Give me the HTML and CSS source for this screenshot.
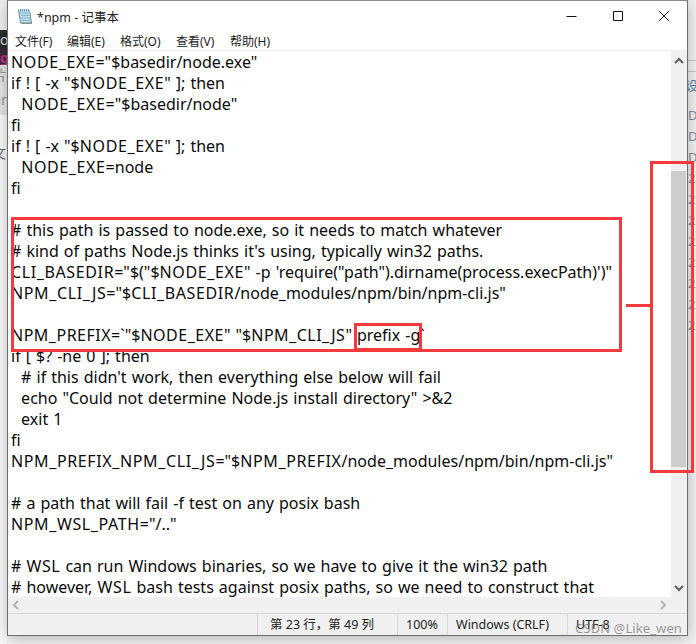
FILE: index.html
```html
<!DOCTYPE html>
<html lang="zh-CN">
<head>
<meta charset="utf-8">
<title>*npm - 记事本</title>
<link rel="stylesheet" href="styles.css">
</head>
<body>
<div class="desktop">
  <div class="bg-left">
    <div class="bl-light"></div>
    <div class="bl-dark">oc</div>
    <div class="bl-pink">g</div>
    <div class="bl-text">片</div>
    <div class="bl-text">er</div>
    <div class="bl-white">文</div>
  </div>
  <div class="bg-right">
    <div class="br-top"></div>
    <div class="br-label">设</div>
    <div class="br-date">D2</div><div class="br-date">D2</div><div class="br-date">D2</div>
    <div class="br-date">22</div><div class="br-date">22</div><div class="br-date">22</div><div class="br-date">22</div>
    <div class="br-date">22</div><div class="br-date">22</div><div class="br-date">22</div><div class="br-date">22</div>
  </div>

  <div class="window">
    <header class="titlebar">
      <svg class="app-icon" width="17" height="17" viewBox="0 0 17 17">
        <path d="M1.500 2h11l2 13h-11z" fill="#b9dcec" stroke="#6d8f9e"/>
        <path d="M3.500 5h9M3.900 7.500h9M4.300 10h9M4.700 12.500h9" stroke="#7fb0c6" stroke-width=".8"/>
        <path d="M1.500 1.500h11.500v2H1.500z" fill="#4f93b5"/>
        <path d="M2.500 1v3M4.500 1v3M6.500 1v3M8.500 1v3M10.500 1v3M12.500 1v3" stroke="#e8f3f7" stroke-width=".7"/>
        <path d="M4.500 15.500h10.500" stroke="#8a8f80" stroke-width="1"/>
      </svg>
      <span class="title">*npm - 记事本</span>
      <div class="controls">
        <svg class="ctl" width="46" height="20" viewBox="0 0 46 20"><path d="M17.500 10.500h10" stroke="#111" fill="none"/></svg>
        <svg class="ctl" width="46" height="20" viewBox="0 0 46 20"><path d="M18.500 5.500h9v9h-9z" stroke="#111" fill="none"/></svg>
        <svg class="ctl" width="46" height="20" viewBox="0 0 46 20"><path d="M18 5l10 10M28 5L18 15" stroke="#111" fill="none"/></svg>
      </div>
    </header>
    <nav class="menu">
      <span class="m1">文件(F)</span><span class="m2">编辑(E)</span><span class="m3">格式(O)</span><span class="m4">查看(V)</span><span class="m5">帮助(H)</span>
    </nav>
    <div class="editor-row">
      <pre class="editor"><span class="u">NODE_EXE</span>="$basedir/node.exe"
if ! [ -x "$<span class="u">NODE_EXE</span>" ]; then
  <span class="u">NODE_EXE</span>="$basedir/node"
fi
if ! [ -x "$<span class="u">NODE_EXE</span>" ]; then
  <span class="u">NODE_EXE</span>=node
fi

# this path is passed to node.exe, so it needs to match whatever
# kind of paths Node.js thinks it's using, typically win32 paths.
<span class="u">CLI_BASEDIR</span>="$("$<span class="u">NODE_EXE</span>" -p 'require("path").dirname(process.execPath)')"
<span class="u">NPM_CLI_JS</span>="$<span class="u">CLI_BASEDIR</span>/node_modules/npm/bin/npm-cli.js"

<span class="u2">NPM_PREFIX</span>=`"$<span class="u2">NODE_EXE</span>" "$<span class="u2">NPM_CLI_JS</span>" prefix -g`
if [ $? -ne 0 ]; then
  # if this didn't work, then everything else below will fail
  echo "Could not determine Node.js install directory" &gt;&amp;2
  exit 1
fi
<span class="u">NPM_PREFIX_NPM_CLI_JS</span>="$<span class="u">NPM_PREFIX</span>/node_modules/npm/bin/npm-cli.js"

# a path that will fail -f test on any posix bash
<span class="u">NPM_WSL_PATH</span>="/.."

# <span class="u">WSL</span> can run Windows binaries, so we have to give it the win32 path
# however, <span class="u">WSL</span> bash tests against posix paths, so we need to construct that</pre>
      <div class="vscroll">
        <svg width="16" height="17" viewBox="0 0 16 17"><path d="M4 12l4-4 4 4" stroke="#606060" stroke-width="2" fill="none"/></svg>
        <div class="thumb-gap"></div>
        <div class="thumb"></div>
        <div class="track"></div>
        <svg width="16" height="17" viewBox="0 0 16 17"><path d="M4 6l4 4 4-4" stroke="#606060" stroke-width="2" fill="none"/></svg>
      </div>
    </div>
    <div class="hscroll">
      <svg width="16" height="16" viewBox="0 0 16 16"><path d="M10 4L6 8l4 4" stroke="#b5b5b5" stroke-width="2" fill="none"/></svg>
      <svg width="16" height="16" viewBox="0 0 16 16"><path d="M6 4l4 4-4 4" stroke="#b5b5b5" stroke-width="2" fill="none"/></svg>
    </div>
    <footer class="status">
      <span class="s-empty"></span>
      <span class="s-pos">第 23 行，第 49 列</span>
      <span class="s-zoom">100%</span>
      <span class="s-eol">Windows (CRLF)</span>
      <span class="s-enc">UTF-8</span>
    </footer>
  </div>

  <div class="mark box-main"></div>
  <div class="mark box-prefix"></div>
  <div class="mark box-scroll"></div>
  <div class="mark-line"></div>
  <div class="watermark">CSDN @Like_wen</div>
</div>
</body>
</html>
```
FILE: styles.css
```css
html, body { margin: 0; padding: 0; }
body { font-family: "Noto Sans", "Noto Sans CJK SC", sans-serif; }

.desktop {
  position: relative;
  width: 696px;
  height: 644px;
  overflow: hidden;
  background: #f4f4f4;
}

.bg-left {
  position: absolute;
  left: 0; top: 0;
  width: 7px;
  height: 644px;
  overflow: hidden;
  background: #e8e8e8;
  display: flex;
  flex-direction: column;
  font-size: 14px;
  line-height: 20px;
  color: #999;
}
.bl-light { height: 30px; background: #f2f2f2; }
.bl-dark { height: 18px; background: #2e2e2e; color: #ddd; white-space: nowrap; margin-left: -6px; padding-left: 6px; }
.bl-pink { height: 17px; background: #3a2a3a; color: #d0307a; font-weight: 700; }
.bl-text { height: 25px; background: #e6e6e6; margin-left: -7px; white-space: nowrap; }
.bl-white { height: 529px; background: #fbfbfb; color: #666; margin-left: -8px; padding-top: 28px; box-sizing: border-box; }

.bg-right {
  position: absolute;
  left: 688px; top: 0;
  width: 8px;
  height: 644px;
  overflow: hidden;
  background: #f3f3f3;
  display: flex;
  flex-direction: column;
  font-size: 13px;
  color: #7d8da0;
}
.br-top {
  height: 60px;
  flex: none;
  border-bottom: 1px solid #c9c9c9;
  box-shadow: 0 10px 0 #f3f3f3, 0 11px 0 #c9c9c9;
}
.br-label { height: 44px; flex: none; padding-top: 12px; box-sizing: border-box; line-height: 24px; color: #5f7fa8; margin-left: -3px; }
.br-date { height: 21px; flex: none; line-height: 21px; white-space: nowrap; }

.window {
  position: absolute;
  left: 7px; top: 0;
  width: 681px;
  height: 636px;
  box-sizing: border-box;
  border: 1px solid #6e6e6e;
  border-top-color: #8a8a8a;
  background: #fff;
  box-shadow: 0 2px 14px rgba(0, 0, 0, .28);
  display: flex;
  flex-direction: column;
}

.titlebar {
  height: 30px;
  display: flex;
  align-items: center;
  padding-left: 9px;
  flex: none;
}
.app-icon { flex: none; }
.title {
  margin-left: 3px;
  font-size: 12.500px;
  color: #222;
  white-space: nowrap;
}
.controls { margin-left: auto; display: flex; }
.ctl { display: block; }

.menu {
  height: 19px;
  flex: none;
  display: flex;
  align-items: center;
  font-size: 12px;
  color: #222;
  border-bottom: 1px solid #f0f0f0;
  white-space: nowrap;
}
.m1 { margin-left: 7px; width: 52px; }
.m2 { width: 53px; }
.m3 { width: 56px; }
.m4 { width: 54px; }

.editor-row { flex: 1; min-height: 0; display: flex; }
.editor {
  flex: 1;
  min-width: 0;
  margin: 0;
  padding: 1px 0 0 3px;
  overflow: hidden;
  white-space: pre;
  font-family: "Noto Sans", "Noto Sans CJK SC", sans-serif;
  font-size: 16px;
  line-height: 21px;
  word-spacing: .9px;
  color: #0a0a0a;
}
.u { letter-spacing: .62px; }
.u2 { letter-spacing: .5px; }

.vscroll {
  width: 16px;
  flex: none;
  background: #f0f0f0;
  display: flex;
  flex-direction: column;
}
.vscroll svg { display: block; flex: none; }
.thumb-gap { height: 103px; flex: none; }
.thumb { height: 296px; margin-right: 1px; background: #cdcdcd; flex: none; }
.track { flex: 1; }

.hscroll {
  height: 16px;
  flex: none;
  background: #f0f0f0;
  display: flex;
  justify-content: space-between;
  padding-right: 16px;
}
.hscroll svg { display: block; }

.status {
  height: 21px;
  flex: none;
  display: flex;
  align-items: center;
  background: #f0f0f0;
  border-top: 1px solid #d7d7d7;
  font-size: 12.500px;
  color: #222;
  white-space: nowrap;
}
.status span { height: 100%; line-height: 21px; box-sizing: border-box; }
.s-empty { width: 249px; }
.s-pos { width: 140px; padding-left: 12px; border-left: 1px solid #d7d7d7; }
.s-zoom { width: 50px; padding-left: 8px; border-left: 1px solid #d7d7d7; }
.s-eol { width: 120px; padding-left: 8px; border-left: 1px solid #d7d7d7; }
.s-enc { flex: 1; padding-left: 8px; border-left: 1px solid #d7d7d7; }

.mark { position: absolute; box-sizing: border-box; border: 3px solid #f43a3d; }
.box-main { left: 11px; top: 217px; width: 611px; height: 135px; }
.box-prefix { left: 354px; top: 323px; width: 68px; height: 28px; }
.box-scroll { left: 650px; top: 161px; width: 44px; height: 312px; }
.mark-line { position: absolute; left: 626px; top: 304px; width: 25px; height: 3px; background: #f43a3d; }

.watermark {
  position: absolute;
  left: 575px; top: 619px;
  font-size: 13px;
  line-height: 18px;
  letter-spacing: .1px;
  color: rgba(90, 90, 90, .6);
  white-space: nowrap;
}
```
